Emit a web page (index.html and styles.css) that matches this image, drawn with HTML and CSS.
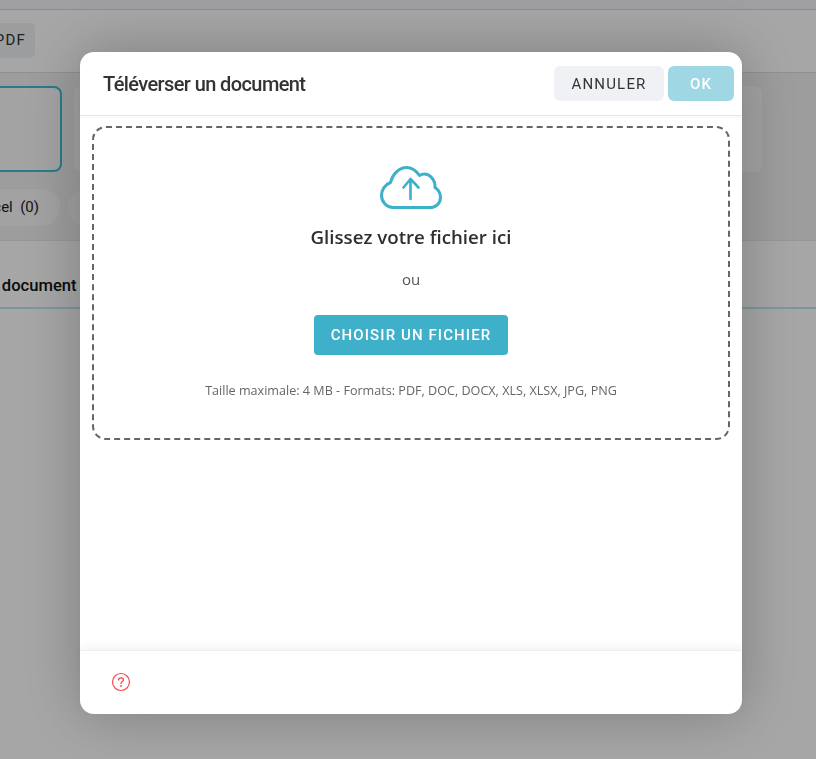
FILE: index.html
```html
<!DOCTYPE html>
<html lang="fr">
<head>
    <meta charset="UTF-8">
    <title>Téléverser un document</title>
    <link rel="stylesheet" href="styles.css">
</head>
<body>
    <div class="page">
        <div class="topbar"></div>
        <div class="toolbar">
            <span class="pdf-btn">PDF</span>
        </div>
        <div class="summary">
            <div class="cards">
                <div class="card active"></div>
                <div class="card"></div>
            </div>
            <div class="filters">
                <span class="chip">Excel&nbsp; (0)</span>
                <span class="chip chip-next"></span>
            </div>
        </div>
        <div class="tabs">
            <span class="tab">Ajouter un document</span>
        </div>
    </div>

    <div class="backdrop"></div>

    <div class="modal">
        <div class="modal-header">
            <h2 class="modal-title">Téléverser un document</h2>
            <div class="modal-actions">
                <button class="btn btn-cancel">ANNULER</button>
                <button class="btn btn-ok">OK</button>
            </div>
        </div>
        <div class="modal-body">
            <div class="dropzone">
                <svg class="cloud" width="64" height="46" viewBox="0 0 64 46" fill="none">
                    <path d="M14 42.5H51C57 42.500 61.500 38 61.500 32.500C61.500 28 59.500 25 56 22.500C56.500 14.500 50.500 9 45.500 9C43.500 9 42 9.500 40.500 10.500C37 5.500 33 2.500 27.500 2.500C20 2.500 13.500 9 11.500 17.500C6 19.500 2.500 25 2.500 30.500C2.500 37 8 42.500 14 42.500Z" stroke="#3eb0c9" stroke-width="3" stroke-linejoin="round"/>
                    <path d="M31.500 34V14M24.500 22.500L31.500 14L39.500 22.500" stroke="#3eb0c9" stroke-width="2.600" stroke-linecap="round" stroke-linejoin="round"/>
                </svg>
                <p class="drop-title">Glissez votre fichier ici</p>
                <p class="drop-or">ou</p>
                <button class="btn-choose">CHOISIR UN FICHIER</button>
                <p class="drop-hint">Taille maximale: 4 MB - Formats: PDF, DOC, DOCX, XLS, XLSX, JPG, PNG</p>
            </div>
        </div>
        <div class="modal-footer">
            <svg width="20" height="20" viewBox="0 0 20 20" fill="none">
                <circle cx="10" cy="10" r="8.500" stroke="#f44b4b" stroke-width="1.200"/>
                <path d="M7.600 8C7.600 6.600 8.700 5.800 10 5.800C11.300 5.800 12.400 6.600 12.400 7.900C12.400 9.600 10 9.600 10 11.500" stroke="#f44b4b" stroke-width="1.300" stroke-linecap="round"/>
                <circle cx="10" cy="14" r="0.900" fill="#f44b4b"/>
            </svg>
        </div>
    </div>
</body>
</html>
```

FILE: styles.css
```css
html, body {
    margin: 0;
    padding: 0;
    height: 100%;
    overflow: hidden;
}

body {
    background-color: #fff;
    font-family: Roboto, "Liberation Sans", sans-serif;
}

.page {
    height: 100%;
    overflow: hidden;
}

.topbar {
    height: 9px;
    background-color: #f4f5f8;
    border-bottom: 1px solid #d5d7da;
}

.toolbar {
    height: 63px;
    border-bottom: 1px solid #dcdee0;
    padding-top: 13px;
    box-sizing: border-box;
}

.pdf-btn {
    display: block;
    width: 75px;
    height: 35px;
    margin-left: -40px;
    background-color: #f0f1f5;
    border-radius: 5px;
    color: #333;
    font-size: 15px;
    letter-spacing: 1.2px;
    line-height: 35px;
    text-align: right;
    padding-right: 9px;
    box-sizing: border-box;
}

.summary {
    background-color: #f1f1f2;
    border-bottom: 1px solid #e6e7e9;
}

.cards {
    display: flex;
    gap: 12px;
    margin-left: -19px;
    padding-top: 13px;
}

.card {
    width: 81px;
    height: 86px;
    box-sizing: border-box;
    background-color: #fbfbfb;
    border-radius: 8px;
}

.card + .card {
    width: 688px;
}

.card.active {
    border: 2px solid #3fbdd6;
}

.filters {
    display: flex;
    gap: 8px;
    height: 68px;
    padding-top: 17px;
    box-sizing: border-box;
    margin-left: -60px;
}

.chip {
    height: 37px;
    line-height: 37px;
    padding: 0 21px 0 0;
    width: 120px;
    box-sizing: border-box;
    background-color: #f9f9f9;
    border-radius: 19px;
    font-size: 15px;
    color: #222;
    white-space: nowrap;
    text-align: right;
}

.chip-next {
    width: 60px;
}

.tabs {
    height: 68px;
    box-sizing: border-box;
    border-bottom: 2px solid #bfe8f0;
    margin-left: -79px;
    padding-top: 35px;
}

.tab {
    font-size: 16.6px;
    font-weight: 500;
    color: #111;
}

.backdrop {
    position: fixed;
    top: 0;
    left: 0;
    right: 0;
    bottom: 0;
    background-color: rgba(0, 0, 0, 0.35);
}

.modal {
    position: fixed;
    top: 52px;
    left: 80px;
    width: 662px;
    height: 662px;
    display: flex;
    flex-direction: column;
    background-color: #fff;
    border-radius: 14px;
    box-shadow: 0 0 60px rgba(0, 0, 0, 0.25);
}

.modal-header {
    display: flex;
    align-items: center;
    justify-content: space-between;
    height: 63px;
    padding: 0 8px 0 23px;
    border-bottom: 1px solid #e8e8e8;
    box-shadow: 0 1px 4px rgba(0, 0, 0, 0.04);
}

.modal-title {
    margin: 0;
    font-size: 20px;
    font-weight: 500;
    letter-spacing: -0.6px;
    color: #333;
}

.modal-actions {
    display: flex;
    gap: 4px;
}

.btn {
    height: 35px;
    border: none;
    border-radius: 6px;
    font-family: Roboto, "Liberation Sans", sans-serif;
    font-size: 15px;
    letter-spacing: 1.2px;
}

.btn-cancel {
    width: 110px;
    background-color: #f0f1f5;
    color: #333;
    font-weight: 400;
}

.btn-ok {
    width: 66px;
    background-color: #9fd8e4;
    color: #fff;
    font-weight: 500;
}

.modal-body {
    flex: 1;
    padding: 10px 12px 0 12px;
}

.dropzone {
    height: 314px;
    box-sizing: border-box;
    border: 2px dashed #666;
    border-radius: 14px;
    display: flex;
    flex-direction: column;
    align-items: center;
    padding-top: 37px;
}

.drop-title {
    margin: 13px 0 0;
    font-family: "Open Sans", sans-serif;
    font-size: 18.7px;
    font-weight: 600;
    line-height: 26px;
    color: #2f2f2f;
}

.drop-or {
    margin: 19px 0 0;
    font-family: "Open Sans", sans-serif;
    font-size: 15px;
    line-height: 20px;
    color: #555;
}

.btn-choose {
    margin-top: 26px;
    width: 194px;
    height: 40px;
    border: none;
    border-radius: 4px;
    background-color: #3eb0c9;
    color: #fff;
    font-family: Roboto, "Liberation Sans", sans-serif;
    font-size: 15px;
    font-weight: 500;
    letter-spacing: 1.1px;
}

.drop-hint {
    margin: 27px 0 0;
    font-family: "Open Sans", sans-serif;
    font-size: 12.6px;
    line-height: 17px;
    color: #666;
}

.modal-footer {
    height: 64px;
    display: flex;
    align-items: center;
    padding: 0 0 1px 31px;
    box-sizing: border-box;
    border-top: 1px solid #eee;
    box-shadow: 0 -3px 8px rgba(0, 0, 0, 0.05);
}
```
